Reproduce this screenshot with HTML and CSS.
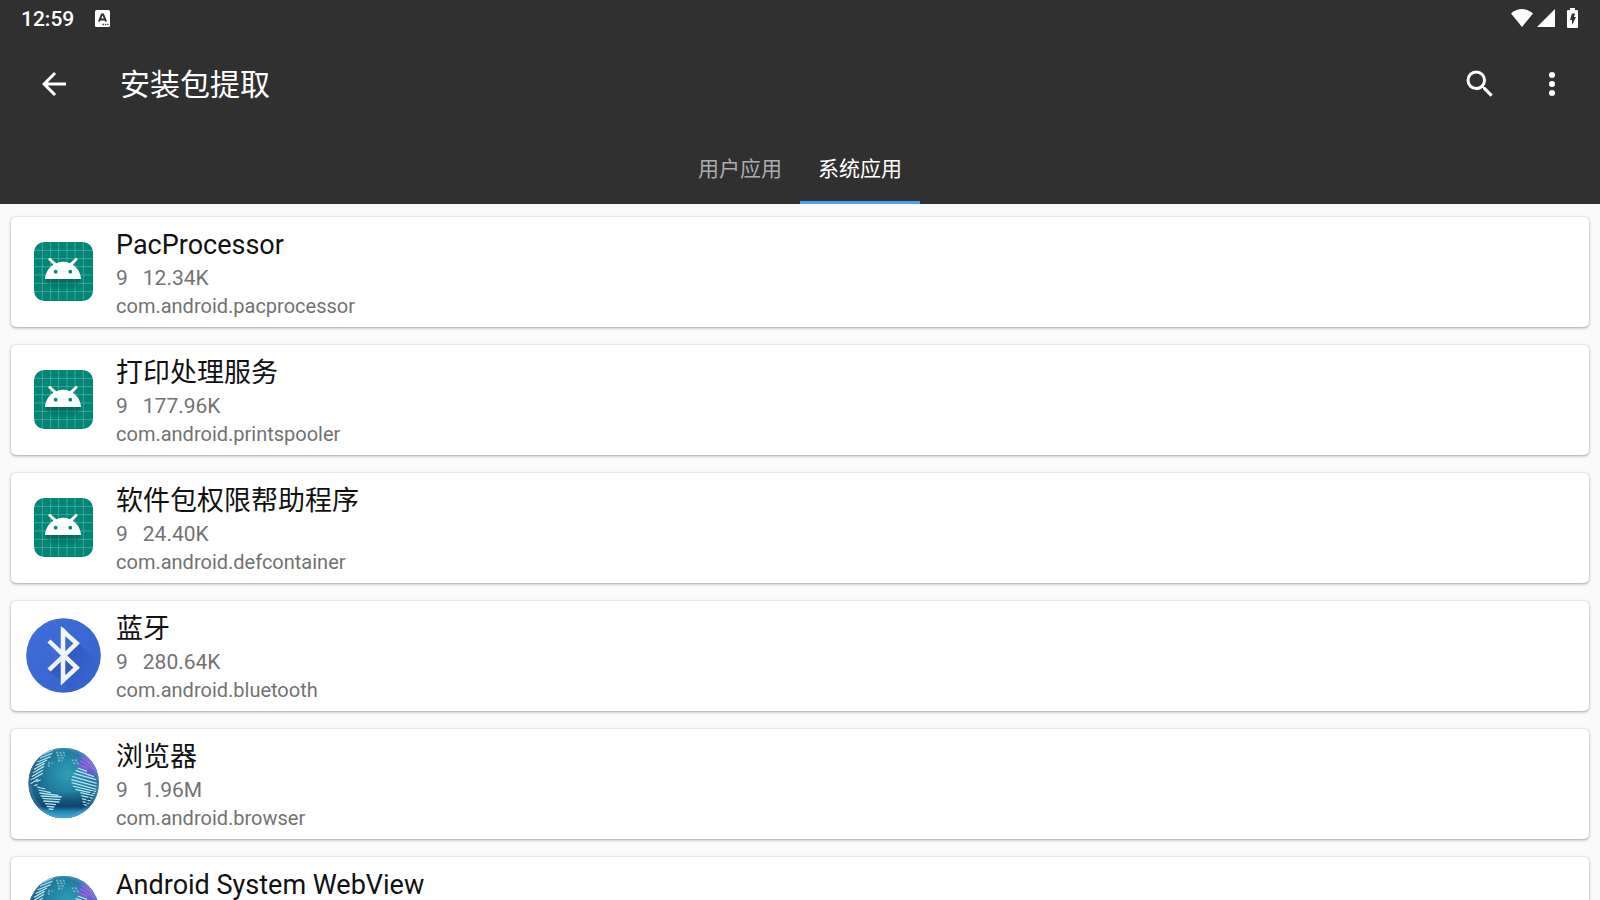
FILE: index.html
```html
<!DOCTYPE html>
<html lang="zh-CN">
<head>
<meta charset="utf-8">
<meta name="viewport" content="width=device-width, initial-scale=1">
<title>安装包提取</title>
<link rel="stylesheet" href="styles.css">
</head>
<body>
<svg class="sprite" aria-hidden="true">
  <defs>
    <linearGradient id="blue" x1="0" y1="0" x2="1" y2="1">
      <stop offset="0" stop-color="#3f6fdc"/><stop offset="1" stop-color="#3561cc"/>
    </linearGradient>
    <linearGradient id="bt-shade" x1="0" y1="0" x2="1" y2="1">
      <stop offset="0" stop-color="#2a4fae" stop-opacity=".75"/><stop offset=".6" stop-color="#2a4fae" stop-opacity="0"/>
    </linearGradient>
    <radialGradient id="sea" cx=".55" cy=".36" r=".62">
      <stop offset="0" stop-color="#2b9db4"/><stop offset=".45" stop-color="#1f7c9f"/><stop offset=".8" stop-color="#155a80"/><stop offset="1" stop-color="#1c6690"/>
    </radialGradient>
    <radialGradient id="rim" cx=".5" cy=".5" r=".5">
      <stop offset=".88" stop-color="#6fb4cd" stop-opacity="0"/><stop offset="1" stop-color="#6fb4cd" stop-opacity=".45"/>
    </radialGradient>
    <radialGradient id="violet" cx="216" cy="72" r="54" gradientUnits="userSpaceOnUse">
      <stop offset="0" stop-color="#8a55dc"/><stop offset=".45" stop-color="#7a5bd4" stop-opacity=".8"/><stop offset="1" stop-color="#5d6ccc" stop-opacity="0"/>
    </radialGradient>
    <linearGradient id="glow" x1="0" y1="0" x2="0" y2="1">
      <stop offset=".62" stop-color="#0d3c62" stop-opacity="0"/><stop offset=".83" stop-color="#0d3c62" stop-opacity=".75"/><stop offset=".9" stop-color="#2287b8"/><stop offset="1" stop-color="#37a4d2"/>
    </linearGradient>
    <linearGradient id="droid-shade" x1="0" y1="0" x2="0" y2="1">
      <stop offset="0" stop-color="#00564a" stop-opacity=".6"/><stop offset="1" stop-color="#00564a" stop-opacity="0"/>
    </linearGradient>
    <pattern id="dots" width="10" height="12" patternUnits="userSpaceOnUse" patternTransform="rotate(8)">
      <circle cx="3" cy="3" r="1.7" fill="#5bb9cf" opacity=".5"/><circle cx="8" cy="9" r="1.7" fill="#5bb9cf" opacity=".4"/>
    </pattern>
    <clipPath id="ball"><circle cx="131" cy="129" r="106"/></clipPath>
    <clipPath id="disc"><circle cx="130.500" cy="136.500" r="112"/></clipPath>
  </defs>
  <symbol id="droid" viewBox="18 12 225 225">
    <rect x="42" y="36" width="177" height="177" rx="31" fill="#018675"/>
    <path d="M67 36v177M92 36v177M116 36v177M141 36v177M165 36v177M190 36v177M42 61h177M42 86h177M42 110h177M42 135h177M42 160h177M42 185h177" fill="none" stroke="#74c1b6" stroke-width="2" opacity=".8"/>
    <path d="M76 147h106l-20 32h-66z" fill="url(#droid-shade)"/>
    <path d="M75 147c1-18 11-34 25-43L86 90c-3-3 2-8 6-5l17 15c13-6 28-6 41 0l16-15c4-3 9 2 6 5l-14 14c15 9 24 25 25 43z" fill="#fff"/>
    <circle cx="107" cy="125" r="5.500" fill="#018675"/><circle cx="151" cy="125" r="5.500" fill="#018675"/>
  </symbol>
  <symbol id="bluetooth" viewBox="18 24 225 225">
    <circle cx="130.500" cy="136.500" r="112" fill="url(#blue)"/>
    <g clip-path="url(#disc)"><path d="M175 100L260 185V270H180L130 218L142 140z" fill="url(#bt-shade)"/><path d="M84 182l48-46v82z" fill="#2d54b5" opacity=".55"/></g>
    <path d="M87 93L170 173L129 211V63L170 100L87 180" fill="none" stroke="#f4f5f8" stroke-width="13.500"/>
    <path d="M123 53h7l9 9H123zM123 220h7l9-11H123z" fill="#f4f5f8"/>
  </symbol>
  <symbol id="globe" viewBox="18 18 225 225">
    <g clip-path="url(#ball)">
      <rect x="25" y="23" width="212" height="212" fill="url(#sea)"/>
      <path d="M25 125C32 184 64 211 102 217L110 236H25zM25 150V60L65 36 40 120z" fill="#0a2f50" opacity=".65"/>
      <rect x="25" y="23" width="212" height="212" fill="url(#dots)"/>
      <rect x="25" y="23" width="212" height="212" fill="url(#glow)"/>
      <rect x="25" y="23" width="212" height="212" fill="url(#violet)"/>
      <g fill="none" stroke="#b4e6f2" stroke-width="3.800">
        <path d="M70 43l28-13M60 54l37-14M52 66l40-16M47 77l34-17M42 88l32-18M38 99l34-20M35 110l34-20M32 120l36-20M32 131l22-14M49 125l13-5M43 137l9-3"/>
        <path d="M51 141l25 6M55 150l37 8M58 159l57 7M62 168l63 3M67 175l54 4M70 183l48 3M75 191l33 3M80 199l23 2M86 207l14 1"/>
        <path d="M173 84l28 10M167 91l55 19M161 100l67 19M156 109l74 21M154 119l76 20M155 128l74 20M158 138l70 17M166 148l59 13M181 158l40 9M184 167l34 8M186 176l27 7M188 185l19 5M191 193l10 3"/>
      </g>
      <g stroke="#8fcbe0" stroke-width="5" stroke-dasharray="6 4" opacity=".75">
        <path d="M108 38h28M111 46h24M115 54h17M114 62h13M155 61h18M160 70h20M84 69h14M83 77h10"/>
      </g>
      <path d="M173 73l30 12M180 62l42 26M184 53l34 23" stroke="#9668e0" stroke-width="4"/>
      <path d="M209 162l12-8M199 180l11-8M194 192l10-7" stroke="#0b3352" stroke-width="5" opacity=".6"/>
      <circle cx="131" cy="129" r="106" fill="url(#rim)"/>
    </g>
  </symbol>
</svg>

<header class="header">
  <div class="status">
    <div class="status-group">
      <time class="clock">12:59</time>
      <svg class="ime" viewBox="0 0 15 17" aria-hidden="true"><rect width="15" height="17" rx="1.500" fill="#fff"/><path d="M4 11.500L6.800 4.500h1.400l2.800 7M5 9.500h5" fill="none" stroke="#303030" stroke-width="2"/><path d="M7.500 14.500h6" stroke="#303030" stroke-width="1.400" stroke-dasharray="1.400 1"/></svg>
    </div>
    <div class="status-group status-right">
      <svg class="wifi" viewBox="0 0 22 18" aria-hidden="true"><path d="M0 4.500C6-1.500 16-1.500 22 4.500L11 18z" fill="#fff"/></svg>
      <svg class="signal" viewBox="0 0 18 18" aria-hidden="true"><path d="M18 0v18H0z" fill="#fff"/></svg>
      <svg class="battery" viewBox="0 0 11 20" aria-hidden="true"><path d="M3 0h5v2h2q1 0 1 1v16q0 1-1 1H1q-1 0-1-1V3q0-1 1-1h2z" fill="#fff"/><path d="M5 5.500h3L7 9h2l-4 8v-5H3z" fill="#303030"/></svg>
    </div>
  </div>
  <div class="toolbar">
    <button class="icon-button" type="button" aria-label="返回"><svg viewBox="0 0 24 24"><path d="M20 11H7.830l5.590-5.590L12 4l-8 8 8 8 1.410-1.410L7.830 13H20z"/></svg></button>
    <h1 class="title">安装包提取</h1>
    <button class="icon-button" type="button" aria-label="搜索"><svg viewBox="0 0 24 24"><path d="M15.500 14h-.79l-.28-.27A6.470 6.470 0 0 0 16 9.500 6.500 6.500 0 1 0 9.500 16c1.610 0 3.090-.59 4.230-1.570l.27.28v.79l5 4.990L20.490 19zm-6 0a4.500 4.500 0 1 1 0-9 4.500 4.500 0 0 1 0 9z"/></svg></button>
    <button class="icon-button" type="button" aria-label="更多选项"><svg viewBox="0 0 24 24"><circle cx="12" cy="6" r="2"/><circle cx="12" cy="12" r="2"/><circle cx="12" cy="18" r="2"/></svg></button>
  </div>
  <div class="tabs" role="tablist">
    <button class="tab" type="button" role="tab" aria-selected="false">用户应用</button>
    <button class="tab" type="button" role="tab" aria-selected="true">系统应用</button>
  </div>
</header>

<main class="content">
  <ul class="app-list">
    <li class="card"><svg class="app-icon" aria-hidden="true"><use href="#droid"/></svg><div class="info"><h2 class="name">PacProcessor</h2><p class="meta"><span>9</span><span>12.34K</span></p><p class="package">com.android.pacprocessor</p></div></li>
    <li class="card"><svg class="app-icon" aria-hidden="true"><use href="#droid"/></svg><div class="info"><h2 class="name">打印处理服务</h2><p class="meta"><span>9</span><span>177.96K</span></p><p class="package">com.android.printspooler</p></div></li>
    <li class="card"><svg class="app-icon" aria-hidden="true"><use href="#droid"/></svg><div class="info"><h2 class="name">软件包权限帮助程序</h2><p class="meta"><span>9</span><span>24.40K</span></p><p class="package">com.android.defcontainer</p></div></li>
    <li class="card"><svg class="app-icon" aria-hidden="true"><use href="#bluetooth"/></svg><div class="info"><h2 class="name">蓝牙</h2><p class="meta"><span>9</span><span>280.64K</span></p><p class="package">com.android.bluetooth</p></div></li>
    <li class="card"><svg class="app-icon" aria-hidden="true"><use href="#globe"/></svg><div class="info"><h2 class="name">浏览器</h2><p class="meta"><span>9</span><span>1.96M</span></p><p class="package">com.android.browser</p></div></li>
    <li class="card"><svg class="app-icon" aria-hidden="true"><use href="#globe"/></svg><div class="info"><h2 class="name">Android System WebView</h2></div></li>
  </ul>
</main>
</body>
</html>
```
FILE: styles.css
```css
* {
  box-sizing: border-box;
}

body {
  margin: 0;
  height: 100vh;
  display: flex;
  flex-direction: column;
  overflow: hidden;
  background: #fafafa;
  color: #111;
  font-family: Roboto, "Noto Sans CJK SC", sans-serif;
}

h1, h2, p, ul {
  margin: 0;
  padding: 0;
  font-weight: 400;
}

button {
  border: 0;
  padding: 0;
  background: none;
  color: inherit;
  font: inherit;
  cursor: pointer;
}

svg {
  display: block;
  flex: none;
}

.sprite {
  position: absolute;
  width: 0;
  height: 0;
}

.header {
  flex: none;
  background: #303030;
  color: #fff;
}

.status {
  display: flex;
  justify-content: space-between;
  height: 36px;
  padding: 0 22px 0 21px;
}

.status-group {
  display: flex;
  align-items: center;
  gap: 21px;
}

.status-right {
  gap: 4px;
}

.clock {
  padding-top: 2px;
  font-size: 21px;
  line-height: 28px;
  font-weight: 500;
}

.ime {
  width: 15px;
  height: 17px;
}

.wifi {
  width: 22px;
  height: 18px;
}

.signal {
  width: 18px;
  height: 18px;
}

.battery {
  width: 11px;
  height: 20px;
  margin-left: 8px;
}

.toolbar {
  display: flex;
  align-items: center;
  height: 96px;
  padding: 0 12px 0 18px;
}

.icon-button {
  display: grid;
  place-items: center;
  width: 72px;
  height: 72px;
}

.icon-button svg {
  width: 36px;
  height: 36px;
  fill: #fff;
}

.title {
  flex: 1;
  padding: 2px 0 0 30px;
  font-size: 30px;
  line-height: 36px;
}

.tabs {
  display: flex;
  justify-content: center;
  height: 72px;
}

.tab {
  width: 120px;
  padding-top: 5px;
  border-bottom: 3px solid transparent;
  color: #acacac;
  font-size: 21px;
  line-height: 28px;
}

.tab[aria-selected="true"] {
  border-color: #479fee;
  color: #fff;
}

.content {
  flex: 1;
  min-height: 0;
  overflow-y: auto;
  scrollbar-width: none;
}

.app-list {
  display: flex;
  flex-direction: column;
  gap: 18px;
  padding: 13px 11px;
  list-style: none;
}

.card {
  display: flex;
  align-items: center;
  gap: 15px;
  min-height: 110px;
  padding: 0 15px 2px;
  border-radius: 5px;
  background: #fff;
  box-shadow: 0 1px 3px rgba(0, 0, 0, 0.32), 0 0 2px rgba(0, 0, 0, 0.12);
}

.app-icon {
  width: 75px;
  height: 75px;
}

.info {
  align-self: flex-start;
  padding: 10px 0 6px;
}

.name {
  font-size: 27px;
  line-height: 36px;
}

.meta {
  display: flex;
  gap: 15px;
  color: #727272;
  font-size: 21px;
  line-height: 30px;
}

.package {
  color: #727272;
  font-size: 20px;
  line-height: 26px;
}
```
